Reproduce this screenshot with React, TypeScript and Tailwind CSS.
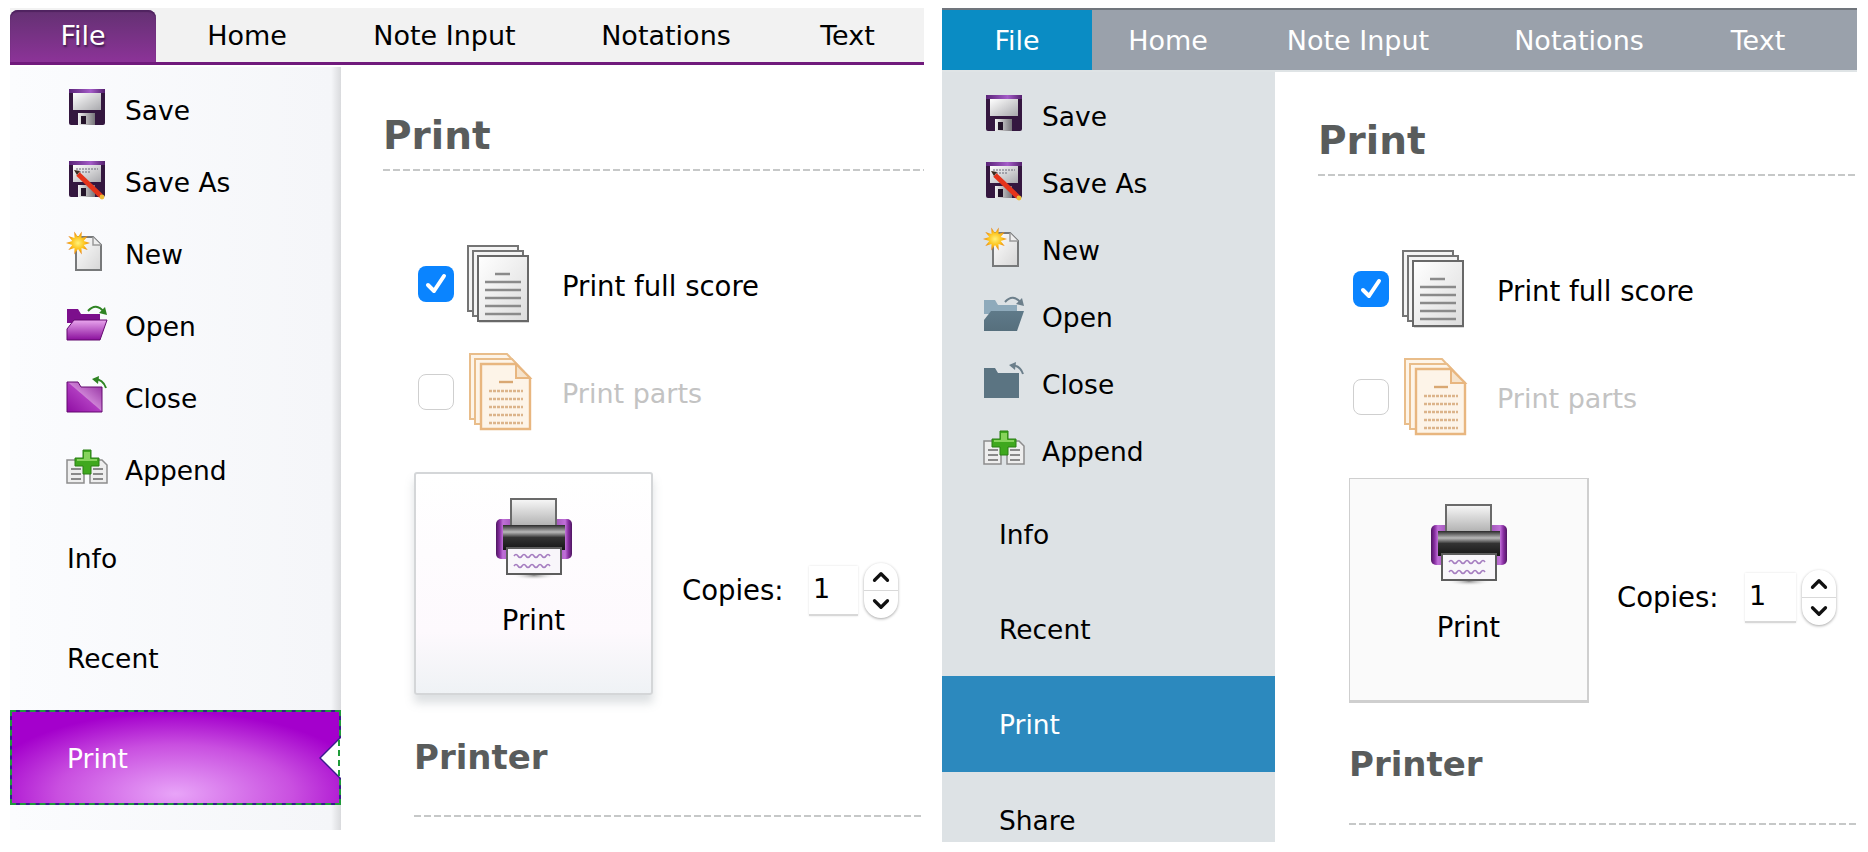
import React from 'react';
import { ChevronUp, ChevronDown } from 'lucide-react';

type Variant = 'old' | 'new';

const starPoints = (cx: number, cy: number, outer: number, inner: number, n: number) =>
  Array.from({ length: n * 2 }, (_, i) => {
    const r = i % 2 === 0 ? outer : inner;
    const a = (Math.PI * i) / n;
    return `${(cx + r * Math.cos(a)).toFixed(1)},${(cy + r * Math.sin(a)).toFixed(1)}`;
  }).join(' ');

const SaveIcon = ({ pencil = false }: { pencil?: boolean }) => (
  <svg width="42" height="42" viewBox="0 0 42 42" className="overflow-visible">
    <defs>
      <linearGradient id="saveLabel" x1="0" y1="0" x2="1" y2="1">
        <stop offset="0" stopColor="#ffffff" />
        <stop offset="1" stopColor="#a9a9ad" />
      </linearGradient>
      <linearGradient id="saveStrip" x1="0" y1="0" x2="1" y2="0">
        <stop offset="0" stopColor="#5a2378" />
        <stop offset="0.6" stopColor="#a45cc8" />
        <stop offset="1" stopColor="#55206e" />
      </linearGradient>
      <linearGradient id="saveShutter" x1="0" y1="0" x2="1" y2="0">
        <stop offset="0" stopColor="#f2f2f2" />
        <stop offset="1" stopColor="#77757a" />
      </linearGradient>
    </defs>
    <rect x="3" y="0" width="36" height="36" rx="2" fill="#34173f" />
    <rect x="3" y="0" width="36" height="4" fill="url(#saveStrip)" />
    <rect x="7" y="4" width="28" height="17" fill="url(#saveLabel)" />
    <rect x="12" y="24" width="17" height="12" fill="url(#saveShutter)" />
    <rect x="15" y="27" width="5" height="8" fill="#231329" />
    {pencil && (
      <g>
        <path d="M10 8h22M10 11h14" stroke="#6a6a78" strokeWidth="1.2" strokeDasharray="2 1" />
        <path d="M12 13L35 35" stroke="#e5341b" strokeWidth="5" />
        <path d="M8 9l6 1-3 4z" fill="#3a2a1e" />
        <circle cx="36" cy="36" r="2.4" fill="#eebd3a" />
      </g>
    )}
  </svg>
);

const NewIcon = () => (
  <svg width="42" height="42" viewBox="0 0 42 42" className="overflow-visible">
    <defs>
      <linearGradient id="newDoc" x1="0" y1="0" x2="1" y2="1">
        <stop offset="0" stopColor="#ffffff" />
        <stop offset="1" stopColor="#d6d6d6" />
      </linearGradient>
      <radialGradient id="newStar">
        <stop offset="0" stopColor="#fff27a" />
        <stop offset="0.55" stopColor="#fdc31c" />
        <stop offset="1" stopColor="#e87d10" />
      </radialGradient>
    </defs>
    <path d="M10 4H27L35 12V37H10Z" fill="url(#newDoc)" stroke="#77797a" strokeWidth="2" />
    <path d="M27 4V12H35" fill="#eeeeee" stroke="#9a9a9a" strokeWidth="1.5" />
    <polygon points={starPoints(12, 10, 12, 6, 10)} fill="url(#newStar)" />
  </svg>
);

const FolderOpenIcon = ({ variant }: { variant: Variant }) => {
  const old = variant === 'old';
  const id = old ? 'openOld' : 'openNew';
  return (
    <svg width="42" height="42" viewBox="0 0 42 42" className="overflow-visible">
      <defs>
        <linearGradient id={id} x1="0" y1="0" x2="0" y2="1">
          <stop offset="0" stopColor={old ? '#e9a6ee' : '#5f7a89'} />
          <stop offset="1" stopColor={old ? '#8a0f9c' : '#566f7d'} />
        </linearGradient>
      </defs>
      <path d="M1 4H12L15 9H34V18H1Z" fill={old ? '#7c0f8c' : '#8eaabb'} />
      <path d="M8 15H41L34 35H1V24Z" fill={`url(#${id})`} stroke={old ? '#63096f' : 'none'} strokeWidth="1" />
      <path d="M22 6Q30 -3 38 7" fill="none" stroke={old ? '#2f8423' : '#6c7f8b'} strokeWidth="2" />
      <path d="M41 10L33 8L39 2Z" fill={old ? '#2f8423' : '#6c7f8b'} />
    </svg>
  );
};

const FolderCloseIcon = ({ variant }: { variant: Variant }) => {
  const old = variant === 'old';
  const id = old ? 'closeOld' : 'closeNew';
  return (
    <svg width="42" height="42" viewBox="0 0 42 42" className="overflow-visible">
      <defs>
        <linearGradient id={id} x1="0" y1="1" x2="1" y2="0">
          <stop offset="0" stopColor={old ? '#8f0da3' : '#5b7482'} />
          <stop offset="0.5" stopColor={old ? '#b03cc0' : '#5b7482'} />
          <stop offset="0.52" stopColor={old ? '#cc80d4' : '#5b7482'} />
          <stop offset="1" stopColor={old ? '#8f2a9c' : '#5b7482'} />
        </linearGradient>
      </defs>
      <path d="M1 5H12L15 10H36V35H1Z" fill={`url(#${id})`} stroke={old ? '#63096f' : 'none'} strokeWidth="1" />
      <path d="M40 11Q37 2 28 2" fill="none" stroke={old ? '#2f8423' : '#6c7f8b'} strokeWidth="2" />
      <path d="M26 2L33 -1L32 7Z" fill={old ? '#2f8423' : '#6c7f8b'} />
    </svg>
  );
};

const AppendIcon = () => (
  <svg width="42" height="42" viewBox="0 0 42 42" className="overflow-visible">
    <path d="M1 11H18V34H1Z" fill="#eeeeee" stroke="#8d8d8d" strokeWidth="1.5" />
    <path d="M24 11H36L41 16V34H24Z" fill="#eeeeee" stroke="#8d8d8d" strokeWidth="1.5" />
    <path d="M5 20H15M5 25H15M5 30H15M27 20H37M27 25H37M27 30H37" stroke="#8a8a8a" strokeWidth="2" />
    <path d="M17 1H25V9H33V17H25V25H17V17H9V9H17Z" fill="#3fa81e" stroke="#2a7f14" strokeWidth="1" />
    <path d="M18 3H24V10H31V12H11V10H18Z" fill="#86d35c" />
  </svg>
);

const ScoreStackIcon = () => (
  <svg width="64" height="78" viewBox="0 0 64 78">
    <defs>
      <linearGradient id="scorePage" x1="0" y1="0" x2="1" y2="1">
        <stop offset="0" stopColor="#ffffff" />
        <stop offset="1" stopColor="#dcdcdc" />
      </linearGradient>
    </defs>
    <rect x="12" y="75" width="50" height="3" fill="#d8d8d8" />
    <rect x="1" y="1" width="50" height="65" fill="#f4f4f4" stroke="#747474" strokeWidth="2" />
    <rect x="6" y="6" width="50" height="65" fill="#f4f4f4" stroke="#747474" strokeWidth="2" />
    <rect x="11" y="11" width="50" height="65" fill="url(#scorePage)" stroke="#686868" strokeWidth="2" />
    <path d="M28 29H43M18 37H54M18 45H54M18 53H54M18 61H54M18 69H54" stroke="#8a8a8a" strokeWidth="2.4" />
  </svg>
);

const PartsStackIcon = () => (
  <svg width="64" height="78" viewBox="0 0 64 78">
    <path d="M1 1H38L50 14V66H1Z" fill="#fdf4e8" stroke="#e9bd8a" strokeWidth="2" />
    <path d="M6 6H43L55 19V71H6Z" fill="#fdf4e8" stroke="#e9bd8a" strokeWidth="2" />
    <path d="M12 11H47L61 25V76H12Z" fill="#fdf4e8" stroke="#e8b67f" strokeWidth="2.4" />
    <path d="M47 11V25H61Z" fill="#f6e3cb" stroke="#e8b67f" strokeWidth="2" />
    <path d="M30 29H44" stroke="#d9a873" strokeWidth="2.4" />
    <path d="M20 38H54M20 46H54M20 54H54M20 62H54M20 70H54" stroke="#dcb48a" strokeWidth="2.4" strokeDasharray="3 1" />
  </svg>
);

const PrinterIcon = () => (
  <svg width="76" height="82" viewBox="0 0 76 82">
    <defs>
      <linearGradient id="printerPaper" x1="0" y1="0" x2="0" y2="1">
        <stop offset="0" stopColor="#f8f8f8" />
        <stop offset="1" stopColor="#a9a9a9" />
      </linearGradient>
      <linearGradient id="printerBand" x1="0" y1="0" x2="0" y2="1">
        <stop offset="0" stopColor="#2a2a2a" />
        <stop offset="0.28" stopColor="#b9b9b9" />
        <stop offset="0.5" stopColor="#333333" />
        <stop offset="1" stopColor="#161616" />
      </linearGradient>
      <linearGradient id="printerSide" x1="0" y1="0" x2="1" y2="0">
        <stop offset="0" stopColor="#4e1560" />
        <stop offset="0.05" stopColor="#8a30a4" />
        <stop offset="0.09" stopColor="#c070d8" />
        <stop offset="0.5" stopColor="#5c1c74" />
        <stop offset="0.91" stopColor="#c070d8" />
        <stop offset="0.95" stopColor="#8a30a4" />
        <stop offset="1" stopColor="#4e1560" />
      </linearGradient>
      <radialGradient id="printerShadow">
        <stop offset="0" stopColor="#8e8e8e" />
        <stop offset="1" stopColor="#ffffff" stopOpacity="0" />
      </radialGradient>
    </defs>
    <rect x="15" y="73" width="46" height="9" fill="url(#printerShadow)" />
    <rect x="0" y="21" width="76" height="40" rx="5" fill="url(#printerSide)" />
    <rect x="15" y="1" width="45" height="30" fill="url(#printerPaper)" stroke="#6a6a6a" strokeWidth="2" />
    <path d="M7 27H69V52H7Z" fill="url(#printerBand)" />
    <rect x="11" y="50" width="54" height="26" fill="#f8f6fa" stroke="#5d5d5d" strokeWidth="2" />
    <path d="M18 58q2-3 4 0t4 0t4 0t4 0t4 0t4 0t4 0t4 0t4 0M18 68q2-3 4 0t4 0t4 0t4 0t4 0t4 0t4 0t4 0t4 0" fill="none" stroke="#a57dc0" strokeWidth="1.6" />
  </svg>
);

const CheckBox = ({ checked }: { checked: boolean }) =>
  checked ? (
    <div className="w-9 h-9 shrink-0 rounded-lg bg-[#0a84ff] flex items-center justify-center">
      <svg width="26" height="26" viewBox="0 0 26 26">
        <path d="M5 14l6 6L21 5" fill="none" stroke="#fff" strokeWidth="4" strokeLinecap="round" strokeLinejoin="round" />
      </svg>
    </div>
  ) : (
    <div className="w-9 h-9 shrink-0 rounded-lg bg-white border border-[#cfcfcf]" />
  );

const Divider = ({ className }: { className: string }) => (
  <div className={`h-[2px] bg-[repeating-linear-gradient(90deg,#c6c8c8_0_7px,transparent_7px_10px)] ${className}`} />
);

const PrintPane = ({ variant }: { variant: Variant }) => {
  const old = variant === 'old';
  return (
    <main className={`flex-1 min-w-0 bg-white overflow-hidden ${old ? 'pl-[42px] pt-[45px]' : 'pl-[43px] pt-[45px]'}`}>
      <h1 className="text-[39px] leading-[48px] font-bold text-[#595c5c]">Print</h1>
      <Divider className="mt-[9px]" />

      <div className="flex items-center h-[78px] ml-[35px] mt-[74px]">
        <CheckBox checked />
        <div className="ml-[13px] w-16 shrink-0">
          <ScoreStackIcon />
        </div>
        <span className="text-black text-[27.5px] ml-[31px] mt-[5px]">Print full score</span>
      </div>
      <div className="flex items-center h-[78px] ml-[35px] mt-[30px]">
        <CheckBox checked={false} />
        <div className="ml-[15px] w-16 shrink-0">
          <PartsStackIcon />
        </div>
        <span className="text-[#c3c3c3] text-[27px] ml-[29px] mt-[5px]">Print parts</span>
      </div>

      <div className={`flex items-start ml-[31px] ${old ? 'mt-[41px]' : 'mt-[42px]'}`}>
        <div
          className={
            old
              ? 'w-[239px] h-[223px] shrink-0 flex flex-col items-center pt-[24px] rounded-[3px] border-2 border-[#d4d6d8] bg-[linear-gradient(180deg,#ffffff_0%,#fdf9fd_72%,#eff2f5_100%)] shadow-[0_8px_10px_rgba(120,130,140,0.25)]'
              : 'w-[240px] h-[225px] shrink-0 flex flex-col items-center pt-[25px] border border-[#cfcfcf] border-r-2 border-b-[3px] bg-[#fafafa]'
          }
        >
          <PrinterIcon />
          <span className={`text-black text-[27.5px] leading-8 ${old ? 'mt-[24px]' : 'mt-[25px]'}`}>Print</span>
        </div>
        <div className={`flex items-center ${old ? 'ml-[29px] mt-[91px]' : 'ml-[28px] mt-[92px]'}`}>
          <span className={`text-black text-[27.5px] ${old ? 'w-[127px]' : 'w-[128px]'}`}>Copies:</span>
          <div className={`h-[50px] flex items-center pl-[4px] bg-white border-b-2 border-[#d8d8d8] shadow-[0_0_2px_rgba(0,0,0,0.12)] text-black text-[27px] ${old ? 'w-[49px]' : 'w-[51px]'}`}>
            1
          </div>
          <div className="ml-[6px] w-[34px] h-[55px] flex flex-col items-center justify-center rounded-full bg-white shadow-[0_1px_3px_rgba(0,0,0,0.35)]">
            <ChevronUp size={26} strokeWidth={3} className="text-[#111]" />
            <div className="w-full h-px bg-[#d9d9d9]" />
            <ChevronDown size={26} strokeWidth={3} className="text-[#111]" />
          </div>
        </div>
      </div>

      <h2 className={`ml-[31px] text-[34px] leading-[44px] font-bold text-[#595c5c] ${old ? 'mt-[40px]' : 'mt-[39px]'}`}>Printer</h2>
      <Divider className={`ml-[31px] ${old ? 'mt-[36px]' : 'mt-[37px]'}`} />
    </main>
  );
};

const Tabs = ({ variant }: { variant: Variant }) =>
  variant === 'old' ? (
    <div className="shrink-0">
      <div className="flex h-[54px] items-stretch bg-[#f2f2f2] text-black text-[27px]">
        <div className="w-[146px] mt-[2px] pt-[1px] flex items-center justify-center rounded-t-lg text-white bg-[linear-gradient(180deg,#633172_0%,#8c3398_100%)] shadow-[inset_0_2px_1px_#4f2360] [text-shadow:1px_2px_2px_#3d1a4a]">File</div>
        <div className="w-[182px] pt-[2px] flex items-center justify-center">Home</div>
        <div className="w-[213px] pt-[2px] flex items-center justify-center">Note Input</div>
        <div className="w-[230px] pt-[2px] flex items-center justify-center">Notations</div>
        <div className="w-[133px] pt-[2px] flex items-center justify-center">Text</div>
      </div>
      <div className="h-[3px] bg-[#701a7c]" />
      <div className="h-[2px] bg-white" />
    </div>
  ) : (
    <div className="shrink-0">
      <div className="h-[2px] bg-[#70757c]" />
      <div className="flex h-[60px] items-stretch bg-[#9aa1ab] text-white text-[27px]">
        <div className="w-[150px] pt-[2px] flex items-center justify-center bg-[#0a8cc4]">File</div>
        <div className="w-[152px] pt-[2px] flex items-center justify-center">Home</div>
        <div className="w-[228px] pt-[2px] flex items-center justify-center">Note Input</div>
        <div className="w-[214px] pt-[2px] flex items-center justify-center">Notations</div>
        <div className="w-[144px] pt-[2px] flex items-center justify-center">Text</div>
      </div>
      <div className="h-[2px] bg-[#dfe4e6]" />
    </div>
  );

const IconRow = ({ variant, icon, label }: { variant: Variant; icon: React.ReactNode; label: string }) => (
  <div className={`flex items-center text-black ${variant === 'old' ? 'h-[72px] pl-[56px]' : 'h-[67px] pl-[41px]'}`}>
    <div className="shrink-0 w-[59px]">{icon}</div>
    <span className="mt-[2px]">{label}</span>
  </div>
);

const Sidebar = ({ variant }: { variant: Variant }) => {
  const old = variant === 'old';
  const rows = (
    <>
      <IconRow variant={variant} icon={<SaveIcon />} label="Save" />
      <IconRow variant={variant} icon={<SaveIcon pencil />} label="Save As" />
      <IconRow variant={variant} icon={<NewIcon />} label="New" />
      <IconRow variant={variant} icon={<FolderOpenIcon variant={variant} />} label="Open" />
      <IconRow variant={variant} icon={<FolderCloseIcon variant={variant} />} label="Close" />
      <IconRow variant={variant} icon={<AppendIcon />} label="Append" />
    </>
  );

  if (old) {
    return (
      <aside className="w-[331px] shrink-0 pt-[7px] text-[26.5px] bg-[linear-gradient(90deg,#fbfcfe_0%,#f5f6f9_97%,#d9dadd_100%)] text-black">
        {rows}
        <div className="h-[100px] mt-[2px] pt-[2px] flex items-center pl-[57px]">Info</div>
        <div className="h-[100px] pt-[2px] flex items-center pl-[57px]">Recent</div>
        <div className="relative h-[95px] mt-[2px] bg-[#3a1a8c] border-2 border-dashed border-[#1f9a3a] text-white">
          <div className="h-full flex items-center pl-[55px] pt-[2px] bg-[radial-gradient(ellipse_60%_90%_at_50%_90%,#e8a4f8_0%,#c94fe0_60%,#a400cc_100%)]">Print</div>
          <div className="absolute right-[-2px] top-[24px] w-[22px] h-[44px] bg-[#3a1a8c] [clip-path:polygon(100%_0,0_50%,100%_100%)]" />
          <div className="absolute right-[-2px] top-[26px] w-[20px] h-[40px] bg-white [clip-path:polygon(100%_0,0_50%,100%_100%)]" />
          <div className="absolute right-[-1px] top-[28px] h-[36px] border-r-2 border-dashed border-[#1f9a3a]" />
        </div>
      </aside>
    );
  }

  return (
    <aside className="w-[333px] shrink-0 pt-[10px] overflow-hidden text-[26.5px] bg-[#dde2e5] text-black">
      {rows}
      <div className="h-[95px] mt-[2px] pt-[2px] flex items-center pl-[57px]">Info</div>
      <div className="h-[95px] pt-[2px] flex items-center pl-[57px]">Recent</div>
      <div className="h-[96px] pt-[2px] flex items-center pl-[57px] bg-[#2c89be] text-white">Print</div>
      <div className="h-[96px] pt-[2px] flex items-center pl-[57px]">Share</div>
    </aside>
  );
};

const Panel = ({ variant }: { variant: Variant }) => (
  <section className={`flex flex-col overflow-hidden ${variant === 'old' ? 'w-[914px] h-[822px]' : 'w-[915px] h-[834px] ml-[18px]'}`}>
    <Tabs variant={variant} />
    <div className="flex flex-1 min-h-0">
      <Sidebar variant={variant} />
      <PrintPane variant={variant} />
    </div>
  </section>
);

export default function App() {
  return (
    <div className="w-[1868px] h-[852px] overflow-hidden bg-white flex items-start pt-2 pl-[10px] font-['DejaVu_Sans','Liberation_Sans',sans-serif]">
      <Panel variant="old" />
      <Panel variant="new" />
    </div>
  );
}
